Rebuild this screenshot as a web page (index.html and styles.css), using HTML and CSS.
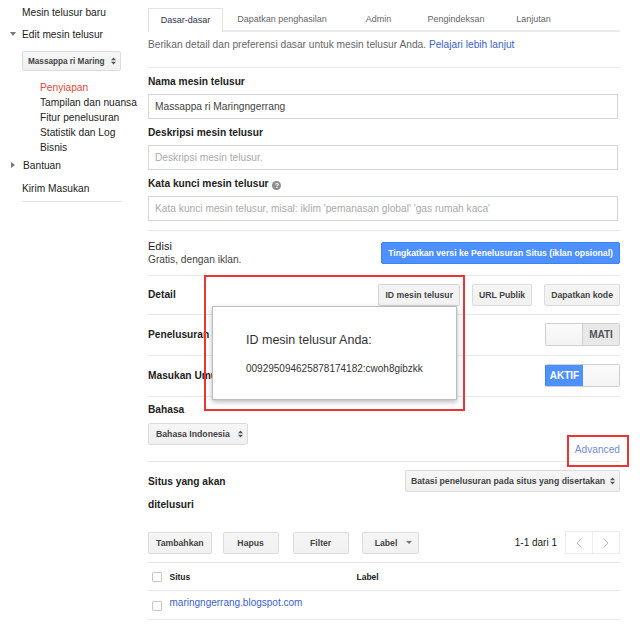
FILE: index.html
```html
<!DOCTYPE html>
<html lang="id">
<head>
<meta charset="utf-8">
<title>Penyiapan - Mesin telusur</title>
<link rel="stylesheet" href="styles.css">
</head>
<body>
<div class="page">
  <aside class="sidebar">
    <div class="nav-item nav-first">Mesin telusur baru</div>
    <div class="nav-item nav-edit"><svg class="caret caret-down" width="6" height="4" viewBox="0 0 6 4"><path d="M0 0H6L3 4Z"/></svg>Edit mesin telusur</div>
    <div class="select nav-select"><span class="select-text">Massappa ri Maring</span><svg class="updown" width="5" height="8" viewBox="0 0 5 8"><path d="M0 3.3L2.5 0.5L5 3.3Z M0 4.7L2.5 7.5L5 4.7Z"/></svg></div>
    <ul class="subnav">
      <li class="current">Penyiapan</li>
      <li>Tampilan dan nuansa</li>
      <li>Fitur penelusuran</li>
      <li>Statistik dan Log</li>
      <li>Bisnis</li>
    </ul>
    <div class="nav-item nav-help"><svg class="caret caret-right" width="4" height="6" viewBox="0 0 4 6"><path d="M0 0V6L4 3Z"/></svg>Bantuan</div>
    <div class="nav-item nav-feedback">Kirim Masukan</div>
    <div class="nav-rule"></div>
  </aside>

  <main class="main">
    <nav class="tabs">
      <span class="tab tab-basic active">Dasar-dasar</span>
      <span class="tab tab-earn">Dapatkan penghasilan</span>
      <span class="tab tab-admin">Admin</span>
      <span class="tab tab-index">Pengindeksan</span>
      <span class="tab tab-adv">Lanjutan</span>
    </nav>

    <p class="intro">Berikan detail dan preferensi dasar untuk mesin telusur Anda. <a class="link">Pelajari lebih lanjut</a></p>

    <section class="fields">
      <div class="field-label">Nama mesin telusur</div>
      <input class="field-input" type="text" value="Massappa ri Maringngerrang">
      <div class="field-label">Deskripsi mesin telusur</div>
      <input class="field-input" type="text" placeholder="Deskripsi mesin telusur.">
      <div class="field-label">Kata kunci mesin telusur <span class="help">?</span></div>
      <input class="field-input" type="text" placeholder="Kata kunci mesin telusur, misal: iklim 'pemanasan global' 'gas rumah kaca'">
    </section>

    <section class="row row-edition">
      <div class="edition">
        <div class="edition-title">Edisi</div>
        <div class="edition-note">Gratis, dengan iklan.</div>
      </div>
      <button class="btn btn-blue">Tingkatkan versi ke Penelusuran Situs (iklan opsional)</button>
    </section>

    <section class="row row-detail">
      <span class="row-label">Detail</span>
      <div class="btn-group">
        <button class="btn btn-pressed">ID mesin telusur</button>
        <button class="btn">URL Publik</button>
        <button class="btn">Dapatkan kode</button>
      </div>
    </section>

    <section class="row row-toggle">
      <span class="row-label">Penelusuran gambar</span>
      <div class="toggle toggle-off"><span class="toggle-blank"></span><span class="toggle-state">MATI</span></div>
    </section>

    <section class="row row-toggle">
      <span class="row-label">Masukan Umum</span>
      <div class="toggle toggle-on"><span class="toggle-state">AKTIF</span><span class="toggle-blank"></span></div>
    </section>

    <section class="lang">
      <div class="row-label">Bahasa</div>
      <div class="select lang-select"><span class="select-text">Bahasa Indonesia</span><svg class="updown" width="5" height="8" viewBox="0 0 5 8"><path d="M0 3.3L2.5 0.5L5 3.3Z M0 4.7L2.5 7.5L5 4.7Z"/></svg></div>
      <div class="advanced"><a class="link-adv">Advanced</a></div>
    </section>

    <section class="sites">
      <div class="sites-head">
        <div class="row-label sites-label">Situs yang akan ditelusuri</div>
        <div class="select sites-select"><span class="select-text">Batasi penelusuran pada situs yang disertakan</span><svg class="updown" width="5" height="8" viewBox="0 0 5 8"><path d="M0 3.3L2.5 0.5L5 3.3Z M0 4.7L2.5 7.5L5 4.7Z"/></svg></div>
      </div>
      <div class="toolbar">
        <button class="btn btn-tool btn-add">Tambahkan</button>
        <button class="btn btn-tool btn-del">Hapus</button>
        <button class="btn btn-tool btn-filter">Filter</button>
        <button class="btn btn-tool btn-label">Label<svg class="drop" width="6" height="3" viewBox="0 0 6 3"><path d="M0 0H6L3 3Z"/></svg></button>
        <div class="pager">
          <span class="pager-count">1-1 dari 1</span>
          <button class="pager-btn"><svg width="6" height="10" viewBox="0 0 6 10"><path d="M5.5 0.5L1 5L5.5 9.5"/></svg></button>
          <button class="pager-btn pager-next"><svg width="6" height="10" viewBox="0 0 6 10"><path d="M0.5 0.5L5 5L0.5 9.5"/></svg></button>
        </div>
      </div>
    </section>

    <div class="thead">
      <span class="checkbox"></span>
      <span class="col-site th">Situs</span>
      <span class="col-label th">Label</span>
    </div>
    <div class="trow">
      <span class="checkbox"></span>
      <a class="col-site site-link">maringngerrang.blogspot.com</a>
      <span class="col-label"></span>
    </div>
  </main>

  <div class="popup">
    <div class="popup-title">ID mesin telusur Anda:</div>
    <div class="popup-id">009295094625878174182:cwoh8gibzkk</div>
  </div>
  <div class="mark mark-popup"></div>
  <div class="mark mark-adv"></div>
</div>
</body>
</html>
```

FILE: styles.css
```css
* { box-sizing: border-box; }

html, body {
  margin: 0;
  padding: 0;
  background: #fff;
}

body {
  font-family: "Liberation Sans", Arial, sans-serif;
  font-size: 10.2px;
  color: #222;
}

.page {
  position: relative;
  display: flex;
  width: 640px;
  height: 624px;
  overflow: hidden;
}

/* ---------- sidebar ---------- */
.sidebar {
  width: 148px;
  flex: none;
  padding-left: 22px;
}

.nav-item {
  line-height: 14px;
  height: 14px;
  color: #222;
  white-space: nowrap;
}

.nav-first { margin-top: 6px; }
.nav-edit { margin-top: 8px; }
.nav-help { margin-top: 4px; }
.nav-feedback { margin-top: 9px; }

.caret {
  display: inline-block;
  vertical-align: middle;
  fill: #777;
  margin-left: -12px;
}
.caret-down { margin-right: 6px; position: relative; top: -1px; }
.caret-right { margin-right: 8px; margin-left: -11px; position: relative; top: -1px; }

.select {
  display: flex;
  align-items: center;
  height: 22px;
  border: 1px solid #dcdcdc;
  border-radius: 2px;
  background: linear-gradient(#f6f6f6, #f0f0f0);
  font-weight: bold;
  font-size: 8.7px;
  color: #444;
  padding: 0 4px 0 6px;
}

.select-text {
  flex: 1;
  white-space: nowrap;
}

.updown {
  flex: none;
  margin-left: 5px;
  fill: #555;
}

.nav-select {
  margin-top: 9px;
  width: 99px;
  height: 20px;
  padding-left: 5px;
  padding-right: 4px;
  font-size: 8.2px;
}

.nav-select .updown { margin-left: 4px; }

.subnav {
  list-style: none;
  margin: 9px 0 0;
  padding: 0 0 0 18px;
}

.subnav li {
  line-height: 15px;
  height: 15px;
  color: #222;
  white-space: nowrap;
}

.subnav li.current { color: #dd4b39; }

.nav-rule {
  margin-top: 5px;
  width: 100px;
  border-top: 1px solid #e5e5e5;
}

/* ---------- main ---------- */
.main {
  width: 472px;
  flex: none;
}

.tabs {
  display: flex;
  align-items: flex-start;
  margin-top: 8px;
  height: 24px;
  border-bottom: 2px solid #ebebeb;
}

.tab {
  height: 22px;
  line-height: 22px;
  font-size: 9px;
  color: #666;
  text-align: center;
  white-space: nowrap;
}

.tab-basic { width: 75px; }
.tab-earn { width: 118px; }
.tab-admin { width: 75px; }
.tab-index { width: 80px; }
.tab-adv { width: 75px; }

.tab.active {
  height: 24px;
  background: #fff;
  border: 1px solid #e3e3e3;
  border-bottom: none;
  color: #34304f;
}

.intro {
  margin: 6px 0 15px;
  line-height: 14px;
  color: #666;
  white-space: nowrap;
}

.link {
  color: #3b5fcc;
  text-decoration: none;
}

.fields {
  border-top: 1px solid #e8e8e8;
  padding-bottom: 9px;
}

.field-label {
  margin-top: 7px;
  line-height: 14px;
  height: 14px;
  font-weight: bold;
  color: #222;
}

.field-input {
  display: block;
  margin-top: 5px;
  width: 470px;
  height: 25px;
  padding: 0 6px;
  border: 1px solid #d6d6d6;
  border-radius: 0;
  font-family: "Liberation Sans", Arial, sans-serif;
  font-size: 10.2px;
  color: #444;
  background: #fff;
  outline: none;
}

.field-input::placeholder { color: #aaa; }

.help {
  display: inline-block;
  width: 9px;
  height: 9px;
  margin-left: 1px;
  border-radius: 50%;
  background: #8d8d8d;
  color: #fff;
  font-size: 7px;
  line-height: 9px;
  text-align: center;
  vertical-align: -1px;
}

.row {
  display: flex;
  align-items: center;
  justify-content: space-between;
  border-top: 1px solid #e8e8e8;
}

.row-label {
  font-weight: bold;
  color: #222;
  line-height: 14px;
  white-space: nowrap;
}

.row-edition {
  align-items: flex-start;
  padding: 8px 0 9px;
}

.edition-title {
  font-size: 11px;
  line-height: 14px;
  color: #222;
}

.edition-note {
  line-height: 13px;
  color: #444;
}

.btn {
  height: 22px;
  padding: 0 6px;
  border: 1px solid #dcdcdc;
  border-radius: 2px;
  background: linear-gradient(#f5f5f5, #f1f1f1);
  color: #444;
  font-family: "Liberation Sans", Arial, sans-serif;
  font-weight: bold;
  font-size: 8.7px;
  line-height: 20px;
  white-space: nowrap;
}

.btn-blue {
  margin-top: 3px;
  background: #4d90fe;
  border-color: #3b82f2;
  color: #fff;
}

.row-detail { padding: 8px 0; }

.btn-group {
  display: flex;
  gap: 12px;
}

.btn-pressed {
  background: #f3f3f3;
  border-color: #d4d4d4;
}

.row-toggle { padding: 8px 0 9px; }

.toggle {
  display: flex;
  width: 75px;
  height: 23px;
  border: 1px solid #cfcfcf;
  border-radius: 2px;
  overflow: hidden;
  font-weight: bold;
  font-size: 10px;
}

.toggle-blank {
  flex: 1;
  background: linear-gradient(#fbfbfb, #f3f3f3);
}

.toggle-state {
  width: 37px;
  display: flex;
  align-items: center;
  justify-content: center;
}

.toggle-off .toggle-state {
  background: #e9e9e9;
  border-left: 1px solid #cfcfcf;
  color: #555;
}

.toggle-on { border-left-color: #3b82f2; }

.toggle-on .toggle-state {
  background: #4d90fe;
  color: #fff;
}

.lang {
  border-top: 1px solid #e8e8e8;
  padding: 6px 0 4px;
}

.lang-select {
  margin-top: 6px;
  width: 100px;
  padding-left: 7px;
}

.advanced {
  margin-top: -2px;
  text-align: right;
  line-height: 14px;
}

.link-adv {
  color: #7489dc;
  text-decoration: none;
}

.sites {
  border-top: 1px solid #e8e8e8;
  padding: 8px 0 8px;
}

.sites-head {
  display: flex;
  justify-content: space-between;
  align-items: flex-start;
}

.sites-label {
  width: 100px;
  line-height: 23px;
  white-space: normal;
}

.sites-select {
  width: 215px;
  padding-left: 5px;
}

.toolbar {
  display: flex;
  align-items: center;
  margin-top: 15px;
}

.btn-tool {
  min-width: 56px;
  padding: 0 7px;
  margin-right: 11px;
}

.btn-del { margin-right: 14px; }
.btn-filter { margin-right: 13px; }

.btn-label {
  display: flex;
  align-items: center;
  padding: 0 6px 0 12px;
  margin-right: 0;
}

.drop {
  margin-left: 9px;
  fill: #777;
}

.pager {
  margin-left: auto;
  display: flex;
  align-items: center;
}

.pager-count {
  font-size: 10px;
  color: #222;
  margin-right: 8px;
}

.pager-btn {
  width: 28px;
  height: 23px;
  padding: 0;
  border: 1px solid #ececec;
  background: #fff;
  display: flex;
  align-items: center;
  justify-content: center;
}

.pager-next { margin-left: -1px; }

.pager-btn svg {
  fill: none;
  stroke: #bdbdbd;
  stroke-width: 1;
}

.thead {
  display: flex;
  align-items: center;
  height: 28px;
  border-top: 1px solid #e8e8e8;
  padding-left: 4px;
}

.checkbox {
  flex: none;
  width: 10px;
  height: 10px;
  border: 1px solid #c8c8c8;
  border-radius: 1px;
  background: #fff;
  margin-right: 7.5px;
}

.col-site { width: 187px; }

.th {
  font-weight: bold;
  font-size: 8.5px;
  color: #222;
}

.thead .col-label {
  font-weight: bold;
  font-size: 8.5px;
  color: #222;
}

.trow {
  display: flex;
  align-items: flex-start;
  height: 30px;
  padding: 5px 0 0 4px;
  border-top: 1px solid #e8e8e8;
  border-bottom: 1px solid #e8e8e8;
}

.trow .checkbox { margin-top: 5px; }

.site-link {
  line-height: 14px;
  font-size: 10px;
  color: #3b5fcc;
  text-decoration: none;
}

/* ---------- overlays ---------- */
.popup {
  position: absolute;
  left: 212px;
  top: 306px;
  width: 245px;
  height: 94px;
  background: #fff;
  border: 1px solid #bcbcbc;
  box-shadow: 0 2px 5px rgba(0, 0, 0, 0.28);
  padding: 25px 0 0 33px;
}

.popup-title {
  font-size: 12.5px;
  line-height: 16px;
  color: #333;
}

.popup-id {
  margin-top: 14px;
  font-size: 10px;
  line-height: 14px;
  color: #333;
}

.mark {
  position: absolute;
  border: 2px solid #ec3434;
}

.mark-popup {
  left: 204px;
  top: 275px;
  width: 261px;
  height: 136px;
}

.mark-adv {
  left: 567px;
  top: 435px;
  width: 62px;
  height: 32px;
}
```
